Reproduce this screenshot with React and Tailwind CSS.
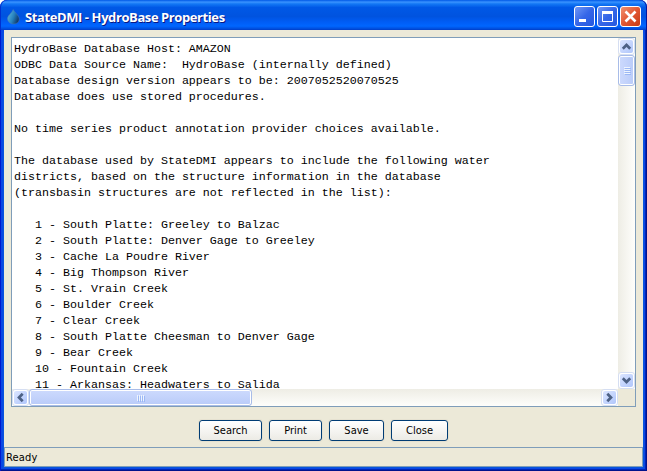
const lines = [
  "HydroBase Database Host: AMAZON",
  "ODBC Data Source Name:  HydroBase (internally defined)",
  "Database design version appears to be: 2007052520070525",
  "Database does use stored procedures.",
  "",
  "No time series product annotation provider choices available.",
  "",
  "The database used by StateDMI appears to include the following water",
  "districts, based on the structure information in the database",
  "(transbasin structures are not reflected in the list):",
  "",
  "   1 - South Platte: Greeley to Balzac",
  "   2 - South Platte: Denver Gage to Greeley",
  "   3 - Cache La Poudre River",
  "   4 - Big Thompson River",
  "   5 - St. Vrain Creek",
  "   6 - Boulder Creek",
  "   7 - Clear Creek",
  "   8 - South Platte Cheesman to Denver Gage",
  "   9 - Bear Creek",
  "   10 - Fountain Creek",
  "   11 - Arkansas: Headwaters to Salida",
];

const chevrons = {
  up: "M3.8 9.7L7.5 6L11.2 9.7",
  down: "M3.8 5.3L7.5 9L11.2 5.3",
  left: "M9.7 3.8L6 7.5L9.7 11.2",
  right: "M5.3 3.8L9 7.5L5.3 11.2",
};

function ScrollButton({ dir }) {
  return (
    <div className="size-[17px] shrink-0 rounded-[3px] border border-[#d5def2] bg-white p-px">
      <div className="size-[13px] rounded-[2px] bg-linear-to-br from-[#dbe5ff] to-[#b0c6fb]">
        <svg viewBox="1 1 13 13" className="block size-[13px]" fill="none" stroke="#4d6185" strokeWidth="2.7">
          <path d={chevrons[dir]} />
        </svg>
      </div>
    </div>
  );
}

function TitleButton({ kind }) {
  const tone = kind === "close" ? "from-[#f0906f] via-[#e25632] to-[#c63a12]" : "from-[#7096f5] via-[#3566e8] to-[#2458df]";
  return (
    <div className={"size-[21px] rounded-[3px] border border-white bg-linear-to-br " + tone}>
      <svg viewBox="0 0 19 19" className="block size-[19px]" fill="none" stroke="#fff">
        {kind === "min" && <path d="M4 13.5h7" strokeWidth="3" />}
        {kind === "max" && <path d="M4.5 4v10.5h10V4" strokeWidth="1" />}
        {kind === "max" && <path d="M4 5.5h11" strokeWidth="3" />}
        {kind === "close" && <path d="M4.5 4.5L14.5 14.5M14.5 4.5L4.5 14.5" strokeWidth="2.6" />}
      </svg>
    </div>
  );
}

function Button({ label, width }) {
  return (
    <div className={"flex h-[21px] items-center justify-center rounded-[3px] border border-[#003c74] bg-linear-to-b from-white to-[#ecebe5] pt-[1.5px] leading-4 shadow-[0_0_0_1px_#e5e1d0] " + width}>
      {label}
    </div>
  );
}

export default function App() {
  return (
    <div className="h-[471px] w-[647px] overflow-hidden bg-white font-['DejaVu_Sans_Condensed','DejaVu_Sans',sans-serif] text-[11px] text-black [font-stretch:condensed]">
      <div className="flex h-full flex-col rounded-t-[7px] bg-[#0831d9]">
        <div className="flex h-[30px] shrink-0 items-center rounded-t-[7px] bg-[linear-gradient(to_bottom,#0058e6_0%,#3a93ff_7%,#1378f5_13%,#0058e6_25%,#0053df_55%,#005cf4_72%,#0066ff_87%,#0050e0_95%,#003dc8_100%)] pt-[3px] pr-[6px] pl-[6px] shadow-[inset_1px_0_#0030cf,inset_-1px_0_#0018a0]">
          <svg viewBox="0 0 16 16" className="mt-px size-4 shrink-0">
            <defs>
              <linearGradient id="drop" x1="0" y1="0.3" x2="1" y2="0.75">
                <stop offset="0" stopColor="#58b4dc" />
                <stop offset="0.5" stopColor="#2680bd" />
                <stop offset="1" stopColor="#0b2c5c" />
              </linearGradient>
            </defs>
            <path d="M7.2 0.5C9 4 13.2 6.5 13.2 10C13.2 13 11 15 7.6 15C4 15 1.5 12.5 1.5 9.5C1.5 6.5 6 4 7.2 0.5Z" fill="url(#drop)" stroke="#4a78b4" strokeWidth="0.5" />
          </svg>
          <div className="ml-[3px] w-[300px] font-['Open_Sans',sans-serif] text-[13px] leading-[18px] font-bold tracking-[-0.41px] whitespace-nowrap text-white [text-shadow:1px_1px_0_#0a1883] [font-stretch:normal]">
            StateDMI - HydroBase Properties
          </div>
          <div className="ml-auto flex gap-[2px]">
            <TitleButton kind="min" />
            <TitleButton kind="max" />
            <TitleButton kind="close" />
          </div>
        </div>
        <div className="flex h-[441px] flex-col px-1 pb-1 shadow-[inset_1px_0_#0019cf,inset_-1px_-1px_#00138c,inset_-2px_-2px_#0026b8,inset_0_0_0_3px_#0a48e4,inset_0_0_0_4px_#0855dd]">
          <div className="flex grow flex-col bg-[#ece9d8]">
            <div className="mt-[7px] ml-[7px] flex h-[370px] w-[625px] shrink-0 flex-col border border-[#7f9db9] bg-white">
              <div className="flex h-[351px]">
                <pre className="m-0 h-[351px] w-[606px] overflow-hidden pt-[3px] pl-[2px] font-['Liberation_Mono',monospace] text-[11.667px] leading-4 [font-stretch:normal]">
                  {lines.join("\n")}
                </pre>
                <div className="flex w-[17px] flex-col bg-linear-to-r from-[#eeede5] to-[#fefefb]">
                  <ScrollButton dir="up" />
                  <div className="flex h-[31px] flex-col items-center justify-center gap-px rounded-[3px] border border-[#a8bce8] bg-linear-to-r from-[#cddafd] to-[#b9cbf9] shadow-[inset_0_0_0_1px_#fff]">
                    {[0, 1, 2, 3].map((i) => (
                      <div key={i} className="h-px w-[6px] bg-[#eef4fe] shadow-[1px_1px_0_#9cb8f5]" />
                    ))}
                  </div>
                  <div className="mt-auto">
                    <ScrollButton dir="down" />
                  </div>
                </div>
              </div>
              <div className="flex h-[17px] bg-[#ece9d8]">
                <div className="flex w-[606px] bg-linear-to-b from-[#eeede5] to-[#fefefb]">
                  <ScrollButton dir="left" />
                  <div className="flex h-[17px] w-[223px] items-center justify-center gap-px rounded-[3px] border border-[#a8bce8] bg-linear-to-b from-[#cddafd] to-[#b9cbf9] shadow-[inset_0_0_0_1px_#fff]">
                    {[0, 1, 2, 3].map((i) => (
                      <div key={i} className="h-[6px] w-px bg-[#eef4fe] shadow-[1px_1px_0_#9cb8f5]" />
                    ))}
                  </div>
                  <div className="ml-auto">
                    <ScrollButton dir="right" />
                  </div>
                </div>
              </div>
            </div>
            <div className="mt-[13px] ml-[195px] flex gap-[7px]">
              <Button label="Search" width="w-[63px]" />
              <Button label="Print" width="w-[53px]" />
              <Button label="Save" width="w-[55px]" />
              <Button label="Close" width="w-[57px]" />
            </div>
            <div className="mt-auto flex h-5 items-center border border-[#7f9db9] pt-[2px] pl-px leading-4 tracking-[0.15px]">Ready</div>
          </div>
        </div>
      </div>
    </div>
  );
}
